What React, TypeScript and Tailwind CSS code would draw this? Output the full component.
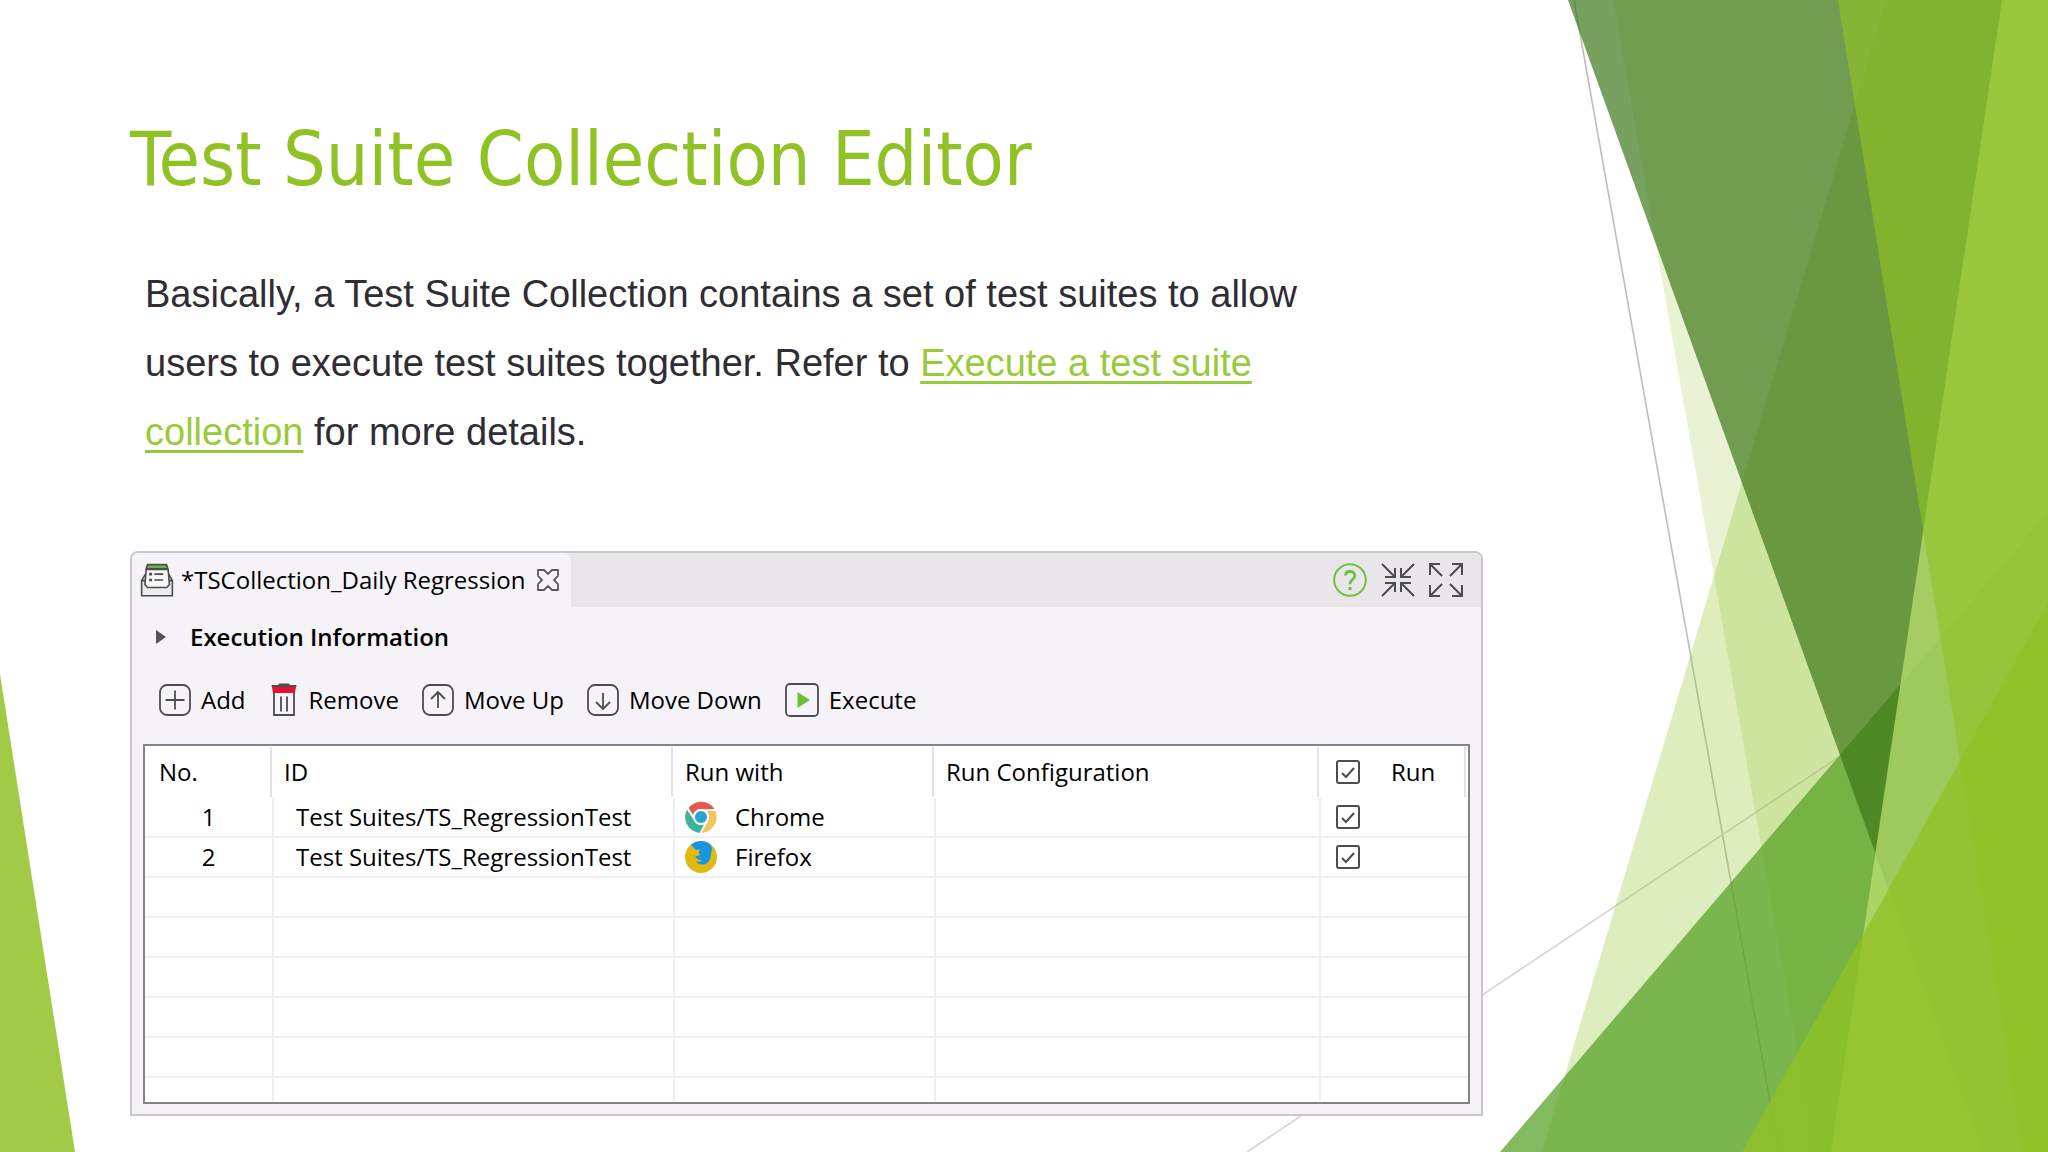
const Backdrop = () => {
  return (
    <svg
      className="absolute inset-0 w-full h-full"
      viewBox="0 0 2048 1152"
      preserveAspectRatio="none"
      aria-hidden="true"
    >
      <line x1="1574" y1="0" x2="1779" y2="1152" stroke="#bfbcc1" strokeWidth="1.6" />
      <line x1="2047" y1="618" x2="1247" y2="1152" stroke="#d6d2d9" strokeWidth="1.6" />
      <polygon points="1886,0 2048,0 2048,1152 1542,1152" fill="#90c226" fillOpacity="0.3" />
      <polygon points="1613,0 2048,0 2048,1152 1815,1152" fill="#90c226" fillOpacity="0.2" />
      <polygon points="2048,512 2048,1152 1500,1152" fill="#54a021" fillOpacity="0.72" />
      <polygon points="1568,0 2048,0 2048,1152 1983,1152" fill="#3f7819" fillOpacity="0.7" />
      <polygon points="2002,0 2048,0 2048,1152 1831,1152" fill="#c0e474" fillOpacity="0.7" />
      <polygon points="1838,0 2048,0 2048,1152 2023,1152" fill="#90c226" fillOpacity="0.65" />
      <polygon points="2048,603 2048,1152 1742,1152" fill="#90c226" fillOpacity="0.8" />
      <polygon points="0,674 75,1152 0,1152" fill="#90c226" fillOpacity="0.85" />
    </svg>
  );
};

const CollectionIcon = () => (
  <svg className="w-[34px] h-[34px]" viewBox="60 70 102 104" fill="none" stroke="#4d4d4f" strokeWidth="5">
    <path d="M76 104l-12 20M147 104l11 20" />
    <path d="M64 124h94v46H64z" fill="#ececee" />
    <path d="M78 90h67l4 46-8 9H82l-8-9z" fill="#f7f7f8" />
    <path d="M82 75h58l4 13H78z" fill="#6db33f" />
    <path d="M87 104h9M87 122h9" strokeWidth="8" />
    <path d="M103 104h27M103 122h27" />
  </svg>
);

const CloseIcon = () => (
  <svg className="w-[22px] h-[22px]" viewBox="0 0 22 22" fill="none" stroke="#5a5a5c" strokeWidth="1.8">
    <path d="M1 1h6l4 4 4-4h6v6l-4 4 4 4v6h-6l-4-4-4 4H1v-6l4-4-4-4z" />
  </svg>
);

const HelpIcon = () => (
  <svg className="w-[34px] h-[34px]" viewBox="0 0 34 34" fill="none" stroke="#70c041">
    <circle cx="17" cy="17" r="15.8" strokeWidth="2" />
    <path d="M12.5 12.5c0-3 2-4 4.6-4s4.7 1.5 4.7 4-1.5 3.5-3 4.7-1.8 1.8-1.8 4" strokeWidth="2.8" />
    <path d="M17 24v3" strokeWidth="3" />
  </svg>
);

const MinimizeIcon = () => (
  <svg className="w-[34px] h-[34px]" viewBox="0 0 34 34" fill="none" stroke="#4d4d4f" strokeWidth="2">
    <path d="M1 1l12 12M4 14h10V5M33 1L21 13M20 5v9h10M1 33l12-12M4 20h10v9M33 33L21 21M20 29v-9h10" />
  </svg>
);

const MaximizeIcon = () => (
  <svg className="w-[34px] h-[34px]" viewBox="0 0 34 34" fill="none" stroke="#4d4d4f" strokeWidth="2">
    <path d="M1 12V1h10M1 1l12 12M23 1h10v11M33 1L21 13M1 22v11h10M1 33l12-12M23 33h10V22M33 33L21 21" />
  </svg>
);

const AddIcon = () => (
  <svg className="w-8 h-8" viewBox="0 0 32 32" fill="none" stroke="#4d4d4f" strokeWidth="1.8">
    <rect x="1" y="1" width="30" height="30" rx="7" />
    <path d="M6.5 16h19M16 6.5v19" />
  </svg>
);

const RemoveIcon = () => (
  <svg className="w-[30px] h-[34px]" viewBox="-2 0 30 34" fill="none" stroke="#4d4d4f" strokeWidth="1.8">
    <path d="M3 10v22h20V10M10 13.5v15M16 13.5v15" />
    <path d="M1 4V2.500h7V1h10v1.500h7V4z" fill="#4d4d4f" strokeWidth="1" />
    <path d="M1 4h24l-1 6H2z" fill="#e8102a" stroke="none" />
  </svg>
);

const UpIcon = () => (
  <svg className="w-8 h-8" viewBox="0 0 32 32" fill="none" stroke="#4d4d4f" strokeWidth="1.8">
    <rect x="1" y="1" width="30" height="30" rx="7" />
    <path d="M16 24V8M9 15l7-7 7 7" />
  </svg>
);

const DownIcon = () => (
  <svg className="w-8 h-8" viewBox="0 0 32 32" fill="none" stroke="#4d4d4f" strokeWidth="1.8">
    <rect x="1" y="1" width="30" height="30" rx="7" />
    <path d="M16 9v16M9 18l7 7 7-7" />
  </svg>
);

const ExecuteIcon = () => (
  <svg className="w-[34px] h-[34px]" viewBox="0 0 34 34" fill="none">
    <rect x="1" y="1" width="32" height="32" rx="4" stroke="#4d4d4f" strokeWidth="1.8" />
    <path d="M12.5 9v16L25 17z" fill="#6fbe3a" />
  </svg>
);

const ChromeIcon = () => (
  <svg className="w-8 h-8" viewBox="0 0 32 32">
    <circle cx="16" cy="16" r="16" fill="#fff" />
    <path d="M3.5 7A16 16 0 0 1 29.5 8L17 8.500A8 8 0 0 0 8 14z" fill="#e25a4d" />
    <path d="M2 8.500A16 16 0 0 0 14.500 32L19 23.500A8 8 0 0 1 8.800 19z" fill="#3db39a" />
    <path d="M30.500 10A16 16 0 0 1 16.500 32L23 20A8 8 0 0 0 21 10z" fill="#efc75e" />
    <circle cx="16" cy="16" r="8" fill="#f4fbfb" />
    <circle cx="16" cy="16" r="6" fill="#2aa3cf" />
  </svg>
);

const FirefoxIcon = () => (
  <svg className="w-8 h-8" viewBox="0 0 32 32">
    <circle cx="16" cy="16" r="16" fill="#dfba12" />
    <path
      d="M6 3.500A16 16 0 0 1 25 3c2 3 2.500 6 1 9.500 0 6-3 10.500-7.500 11-3.500.300-6-1-7.500-3 2 .500 4.500.500 6-1.500-3 0-6-1-6.500-4 1.500.200 3.500 0 4.500-1.500-1.500-1-1.500-3 0-5-2-.200-3 0-4 .500-1.500-1.500-2.500-2.500-5-5.500z"
      fill="#1795e0"
    />
  </svg>
);

const Checkbox = ({ label }: { label: string }) => (
  <span className="grid w-6 h-6">
    <input
      type="checkbox"
      defaultChecked
      aria-label={label}
      className="peer appearance-none [grid-area:1/1] w-6 h-6 rounded-[3px] border-2 border-[#4d4b50] bg-white"
    />
    <svg
      className="[grid-area:1/1] w-6 h-6 pointer-events-none invisible peer-checked:visible"
      viewBox="0 0 24 24"
      fill="none"
      stroke="#4d4b50"
      strokeWidth="2"
    >
      <path d="M6 13l4 4 8-9" />
    </svg>
  </span>
);

const tools = [
  { name: "Add", icon: <AddIcon /> },
  { name: "Remove", icon: <RemoveIcon /> },
  { name: "Move Up", icon: <UpIcon /> },
  { name: "Move Down", icon: <DownIcon /> },
  { name: "Execute", icon: <ExecuteIcon /> },
];

const suites = [
  { no: 1, id: "Test Suites/TS_RegressionTest", browser: "Chrome", icon: <ChromeIcon /> },
  { no: 2, id: "Test Suites/TS_RegressionTest", browser: "Firefox", icon: <FirefoxIcon /> },
];

const emptyRows = [3, 4, 5, 6, 7];

const cell = "border-r-2 border-b-2 border-[#f0eef2] p-0";
const headCell = "flex items-center h-[50px] mr-[2px] border-r-2 border-[#e4e1e6]";

const SuiteTable = () => {
  return (
    <div className="border-2 border-[#858388] bg-white h-[360px] overflow-hidden">
      <table className="w-full h-full table-fixed border-separate border-spacing-0 text-left">
        <colgroup>
          <col className="w-[129px]" />
          <col className="w-[401px]" />
          <col className="w-[261px]" />
          <col />
          <col className="w-[147px]" />
        </colgroup>
        <thead>
          <tr className="h-[52px]">
            <th className="p-0 font-normal">
              <div className={`${headCell} pl-[14px]`}>No.</div>
            </th>
            <th className="p-0 font-normal">
              <div className={`${headCell} pl-[10px]`}>ID</div>
            </th>
            <th className="p-0 font-normal">
              <div className={`${headCell} pl-[10px]`}>Run with</div>
            </th>
            <th className="p-0 font-normal">
              <div className={`${headCell} pl-[10px]`}>Run Configuration</div>
            </th>
            <th className="p-0 font-normal">
              <div className={`${headCell} pl-[15px] gap-[31px]`}>
                <Checkbox label="Run all" />
                Run
              </div>
            </th>
          </tr>
        </thead>
        <tbody>
          {suites.map((item) => {
            return (
              <tr key={item.no} className="h-10">
                <td className={`${cell} text-center`}>{item.no}</td>
                <td className={`${cell} pl-[22px]`}>{item.id}</td>
                <td className={cell}>
                  <div className="flex items-center gap-[18px] pl-[10px]">
                    {item.icon}
                    {item.browser}
                  </div>
                </td>
                <td className={cell}></td>
                <td className="border-b-2 border-[#f0eef2] p-0 pl-[15px]">
                  <Checkbox label={`Run ${item.browser}`} />
                </td>
              </tr>
            );
          })}
          {emptyRows.map((row) => (
            <tr key={row} className="h-10">
              <td className={cell}></td>
              <td className={cell}></td>
              <td className={cell}></td>
              <td className={cell}></td>
              <td className="border-b-2 border-[#f0eef2] p-0"></td>
            </tr>
          ))}
          <tr>
            <td className="border-r-2 border-[#f0eef2]"></td>
            <td className="border-r-2 border-[#f0eef2]"></td>
            <td className="border-r-2 border-[#f0eef2]"></td>
            <td className="border-r-2 border-[#f0eef2]"></td>
            <td></td>
          </tr>
        </tbody>
      </table>
    </div>
  );
};

const EditorPanel = () => {
  return (
    <section className="w-full max-w-[1353px] mt-[84px] rounded-t-lg border-2 border-[#c9c7cb] bg-[#f5f3f7] overflow-hidden text-black text-2xl leading-8 font-['Open_Sans','Noto_Sans',sans-serif]">
      <div className="flex items-stretch justify-between h-[54px] bg-[#e8e6e9]">
        <div className="flex items-center bg-[#f5f3f7] rounded-tr-lg pl-2 pr-3">
          <CollectionIcon />
          <span className="pl-[7px] pr-3">*TSCollection_Daily Regression</span>
          <button aria-label="Close">
            <CloseIcon />
          </button>
        </div>
        <div className="flex items-center gap-[14px] pr-[18px]">
          <button aria-label="Help">
            <HelpIcon />
          </button>
          <button aria-label="Minimize">
            <MinimizeIcon />
          </button>
          <button aria-label="Maximize">
            <MaximizeIcon />
          </button>
        </div>
      </div>
      <button className="flex items-center gap-[24px] h-[60px] pl-[24px] font-semibold">
        <svg className="w-[10px] h-[14px]" viewBox="0 0 10 14">
          <path d="M0 0l10 7-10 7z" fill="#555357" />
        </svg>
        Execution Information
      </button>
      <div className="flex items-center gap-[23px] h-[66px] pl-[27px]">
        {tools.map((tool) => (
          <button key={tool.name} className="flex items-center gap-[10px]">
            {tool.icon}
            {tool.name}
          </button>
        ))}
      </div>
      <div className="px-[11px] pb-[10px] pt-[11px]">
        <SuiteTable />
      </div>
    </section>
  );
};

const App = () => {
  return (
    <main className="relative min-h-screen bg-white overflow-hidden">
      <Backdrop />
      <div className="relative pl-[130px] pt-[113px]">
        <h1 className="text-[75px] leading-[92px] text-[#90c226] font-['DejaVu_Sans_Condensed','DejaVu_Sans',sans-serif]">
          Test Suite Collection Editor
        </h1>
        <p className="max-w-[1220px] pl-[15px] mt-[55px] text-[38px] leading-[69px] text-[#2f2d33] font-['Liberation_Sans',Arial,sans-serif]">
          Basically, a Test Suite Collection contains a set of test suites to allow users to execute test
          suites together. Refer to{" "}
          <a href="#execute" className="text-[#99ca3c] underline decoration-[3px] underline-offset-[5px]">
            Execute a test suite collection
          </a>{" "}
          for more details.
        </p>
        <EditorPanel />
      </div>
    </main>
  );
};

export default App;
